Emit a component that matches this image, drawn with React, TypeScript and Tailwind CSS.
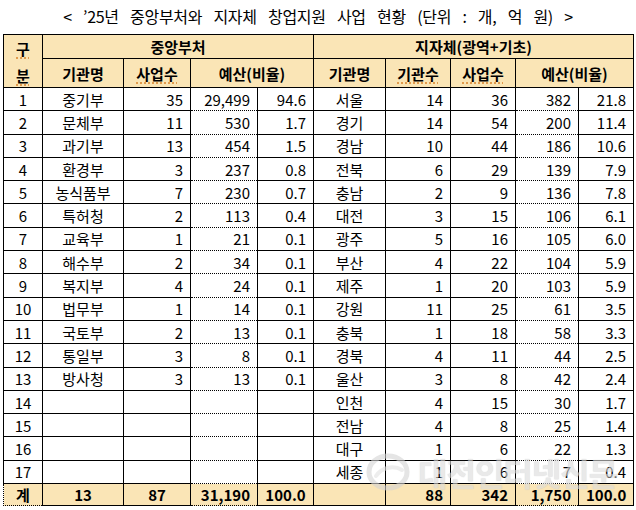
import React from 'react';

type Row = {
    no: string;
    org?: string;
    biz?: string;
    budget?: string;
    ratio?: string;
    region: string;
    agencies: string;
    regionBiz: string;
    regionBudget: string;
    regionRatio: string;
};

const rows: Row[] = [
    { no: '1', org: '중기부', biz: '35', budget: '29,499', ratio: '94.6', region: '서울', agencies: '14', regionBiz: '36', regionBudget: '382', regionRatio: '21.8' },
    { no: '2', org: '문체부', biz: '11', budget: '530', ratio: '1.7', region: '경기', agencies: '14', regionBiz: '54', regionBudget: '200', regionRatio: '11.4' },
    { no: '3', org: '과기부', biz: '13', budget: '454', ratio: '1.5', region: '경남', agencies: '10', regionBiz: '44', regionBudget: '186', regionRatio: '10.6' },
    { no: '4', org: '환경부', biz: '3', budget: '237', ratio: '0.8', region: '전북', agencies: '6', regionBiz: '29', regionBudget: '139', regionRatio: '7.9' },
    { no: '5', org: '농식품부', biz: '7', budget: '230', ratio: '0.7', region: '충남', agencies: '2', regionBiz: '9', regionBudget: '136', regionRatio: '7.8' },
    { no: '6', org: '특허청', biz: '2', budget: '113', ratio: '0.4', region: '대전', agencies: '3', regionBiz: '15', regionBudget: '106', regionRatio: '6.1' },
    { no: '7', org: '교육부', biz: '1', budget: '21', ratio: '0.1', region: '광주', agencies: '5', regionBiz: '16', regionBudget: '105', regionRatio: '6.0' },
    { no: '8', org: '해수부', biz: '2', budget: '34', ratio: '0.1', region: '부산', agencies: '4', regionBiz: '22', regionBudget: '104', regionRatio: '5.9' },
    { no: '9', org: '복지부', biz: '4', budget: '24', ratio: '0.1', region: '제주', agencies: '1', regionBiz: '20', regionBudget: '103', regionRatio: '5.9' },
    { no: '10', org: '법무부', biz: '1', budget: '14', ratio: '0.1', region: '강원', agencies: '11', regionBiz: '25', regionBudget: '61', regionRatio: '3.5' },
    { no: '11', org: '국토부', biz: '2', budget: '13', ratio: '0.1', region: '충북', agencies: '1', regionBiz: '18', regionBudget: '58', regionRatio: '3.3' },
    { no: '12', org: '통일부', biz: '3', budget: '8', ratio: '0.1', region: '경북', agencies: '4', regionBiz: '11', regionBudget: '44', regionRatio: '2.5' },
    { no: '13', org: '방사청', biz: '3', budget: '13', ratio: '0.1', region: '울산', agencies: '3', regionBiz: '8', regionBudget: '42', regionRatio: '2.4' },
    { no: '14', region: '인천', agencies: '4', regionBiz: '15', regionBudget: '30', regionRatio: '1.7' },
    { no: '15', region: '전남', agencies: '4', regionBiz: '8', regionBudget: '25', regionRatio: '1.4' },
    { no: '16', region: '대구', agencies: '1', regionBiz: '6', regionBudget: '22', regionRatio: '1.3' },
    { no: '17', region: '세종', agencies: '1', regionBiz: '6', regionBudget: '7', regionRatio: '0.4' },
];

// 맞춤법 밑줄 (엑셀 캡처 그대로)
const Squiggle = ({ children }: { children: React.ReactNode }) => (
    <span className="underline decoration-dotted decoration-[#d9822b] underline-offset-[3px]">{children}</span>
);

const App = () => {
    const cell = 'border border-black px-[7px] leading-none';
    const num = `${cell} text-right`;
    const amount = 'border-y border-l border-black border-r border-r-black border-dotted px-[7px] text-right leading-none';

    return (
        <div
            className="relative w-[636px] h-[510px] bg-white text-black overflow-hidden"
            style={{ fontFamily: '"Noto Sans CJK KR", "Noto Sans", sans-serif' }}
        >
            {/* 제목 */}
            <div className="h-[34px] flex items-center justify-center text-[16px] tracking-[-0.3px] [word-spacing:8px] pb-[2px]">
                &lt; ’25년 중앙부처와 지자체 창업지원 사업 현황 (단위 : 개, 억 원) &gt;
            </div>

            <table className="ml-[3px] w-[630px] table-fixed border-collapse text-[15px]">
                <colgroup>
                    <col className="w-[39px]" />
                    <col className="w-[81px]" />
                    <col className="w-[67px]" />
                    <col className="w-[67px]" />
                    <col className="w-[56px]" />
                    <col className="w-[72px]" />
                    <col className="w-[65px]" />
                    <col className="w-[65px]" />
                    <col className="w-[63px]" />
                    <col className="w-[55px]" />
                </colgroup>
                <thead className="bg-[#fae5b6] font-bold">
                    <tr className="h-[24px]">
                        <th rowSpan={2} className={`${cell} text-center align-middle px-0`}>
                            <div className="flex flex-col items-center gap-[12px] pt-[2px]">
                                <Squiggle>구</Squiggle>
                                <Squiggle>분</Squiggle>
                            </div>
                        </th>
                        <th colSpan={4} className={`${cell} text-center`}>중앙부처</th>
                        <th colSpan={5} className={`${cell} text-center`}>지자체(광역+기초)</th>
                    </tr>
                    <tr className="h-[29px]">
                        <th className={`${cell} text-center`}>기관명</th>
                        <th className={`${cell} text-center`}><Squiggle>사업수</Squiggle></th>
                        <th colSpan={2} className={`${cell} text-center`}>예산(비율)</th>
                        <th className={`${cell} text-center`}>기관명</th>
                        <th className={`${cell} text-center`}><Squiggle>기관수</Squiggle></th>
                        <th className={`${cell} text-center`}><Squiggle>사업수</Squiggle></th>
                        <th colSpan={2} className={`${cell} text-center`}>예산(비율)</th>
                    </tr>
                </thead>
                <tbody>
                    {rows.map((r) => (
                        <tr key={r.no} className="h-[23.3px]">
                            <td className={`${cell} text-center px-0`}>{r.no}</td>
                            <td className={`${cell} text-center`}>{r.org}</td>
                            <td className={num}>{r.biz}</td>
                            <td className={amount}>{r.budget}</td>
                            <td className={num}>{r.ratio}</td>
                            <td className={`${cell} text-center`}>{r.region}</td>
                            <td className={num}>{r.agencies}</td>
                            <td className={num}>{r.regionBiz}</td>
                            <td className={amount}>{r.regionBudget}</td>
                            <td className={num}>{r.regionRatio}</td>
                        </tr>
                    ))}
                    <tr className="h-[22px] bg-[#fae5b6] font-bold border-t border-dotted border-black">
                        <td className="border-l border-dotted border-black border-b border-b-black border-r border-r-black text-center leading-none">계</td>
                        <td className={`${cell} text-center`}>13</td>
                        <td className={`${cell} text-center`}>87</td>
                        <td className={amount}>31,190</td>
                        <td className={`${cell} text-center`}>100.0</td>
                        <td className={cell}></td>
                        <td className={num}>88</td>
                        <td className={num}>342</td>
                        <td className={amount}>1,750</td>
                        <td className={num}>100.0</td>
                    </tr>
                </tbody>
            </table>

            {/* 워터마크 */}
            <div className="absolute left-[366px] top-[448px] flex items-center gap-[8px] pointer-events-none opacity-60">
                <svg width="44" height="40" viewBox="0 0 44 40" fill="none">
                    <ellipse cx="22" cy="20" rx="19" ry="16" stroke="#d4d4d4" strokeWidth="5" />
                    <path d="M10 24c6-9 18-11 26-6" stroke="#e2e2e2" strokeWidth="4" strokeLinecap="round" />
                </svg>
                <span className="text-[32px] font-bold tracking-[-1px] text-[#dcdcdc] [text-shadow:0_0_1px_#bbb]">
                    대전인터넷신문
                </span>
            </div>
        </div>
    );
};

export default App;
